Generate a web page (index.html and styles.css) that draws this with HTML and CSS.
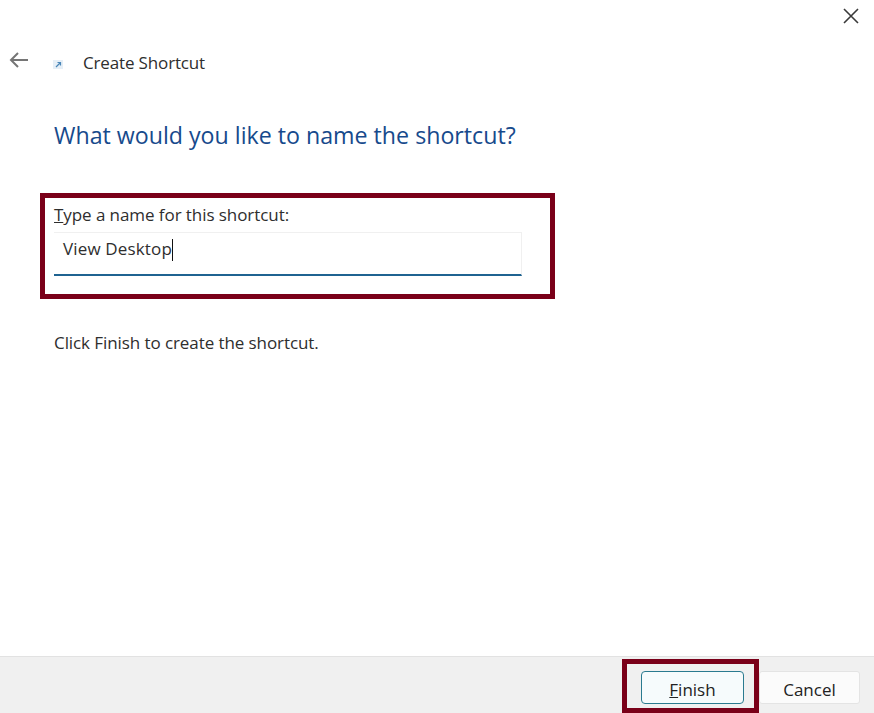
FILE: index.html
```html
<!DOCTYPE html>
<html lang="en">
<head>
    <meta charset="UTF-8">
    <title>Create Shortcut</title>
    <link rel="stylesheet" href="styles.css">
</head>
<body>
    <div class="dialog">
        <div class="title-close">
            <svg class="close-icon" width="16" height="16" viewBox="0 0 16 16">
                <path d="M1 1 L15 15 M15 1 L1 15" stroke="#3a3a3a" stroke-width="1.6" fill="none"/>
            </svg>
        </div>
        <div class="wizard-header">
            <svg class="back-icon" width="20" height="18" viewBox="0 0 20 18">
                <path d="M19 9 H2 M9 2 L2 9 L9 16" stroke="#757575" stroke-width="2" fill="none"/>
            </svg>
            <svg class="shortcut-icon" width="10" height="10" viewBox="0 0 10 10">
                <rect x="0" y="1" width="10" height="9" fill="#e6eff7"/>
                <path d="M3 8 L7 4 M4.500 3.500 H7.500 V6.500" stroke="#4a86b8" stroke-width="1.200" fill="none"/>
            </svg>
            <span class="wizard-title">Create Shortcut</span>
        </div>
        <div class="main">
            <h1 class="heading">What would you like to name the shortcut?</h1>
            <div class="name-box">
                <label class="name-label"><u>T</u>ype a name for this shortcut:</label>
                <div class="name-input">View Desktop<span class="caret"></span></div>
            </div>
            <p class="hint">Click Finish to create the shortcut.</p>
        </div>
        <div class="footer">
            <div class="finish-box">
                <button class="btn btn-primary"><u>F</u>inish</button>
            </div>
            <button class="btn btn-cancel">Cancel</button>
        </div>
    </div>
</body>
</html>
```

FILE: styles.css
```css
html, body {
    margin: 0;
    padding: 0;
    background-color: #ffffff;
}
.dialog {
    width: 874px;
    height: 713px;
    display: flex;
    flex-direction: column;
    overflow: hidden;
    font-family: 'Open Sans', 'Noto Sans', sans-serif;
    font-size: 17px;
    color: #2e2e2e;
}
.title-close {
    height: 24px;
    display: flex;
    justify-content: flex-end;
    align-items: flex-end;
    padding-right: 15px;
}
.wizard-header {
    height: 30px;
    margin-top: 22px;
    display: flex;
    align-items: center;
    padding-left: 9px;
}
.back-icon {
    margin-top: -3px;
}
.shortcut-icon {
    margin-left: 24px;
    margin-top: 6px;
}
.wizard-title {
    margin-left: 20px;
    margin-top: 2px;
    letter-spacing: -0.150px;
}
.main {
    flex: 1;
    padding: 0 0 0 40px;
}
.heading {
    margin: 44px 0 0 14px;
    font-size: 23.200px;
    line-height: 30px;
    font-weight: 400;
    color: #174a8c;
}
.name-box {
    width: 496px;
    height: 96px;
    margin-top: 43px;
    border: 5px solid #7a0019;
    padding: 0 0 0 9px;
}
.name-label {
    display: block;
    margin-top: 6px;
    line-height: 22px;
    letter-spacing: -0.070px;
}
.name-input {
    width: 458px;
    height: 41px;
    margin-top: 6px;
    padding-left: 9px;
    border: 1px solid #f0f0f0;
    border-bottom: 2px solid #1f6391;
    border-left-width: 0;
    line-height: 32px;
    letter-spacing: 0.150px;
}
.caret {
    display: inline-block;
    width: 1px;
    height: 22px;
    background-color: #111111;
    vertical-align: -6px;
}
.hint {
    margin: 33px 0 0 14px;
    line-height: 22px;
    letter-spacing: -0.080px;
}
.footer {
    height: 56px;
    background-color: #f0f0f0;
    border-top: 1px solid #e2e2e2;
    display: flex;
    justify-content: flex-end;
    align-items: flex-start;
    padding-right: 14px;
}
.finish-box {
    width: 113px;
    height: 37px;
    margin-top: 2px;
    border: 5px solid #7a0019;
    padding: 7px 0 0 14px;
}
.btn {
    height: 33px;
    font-family: inherit;
    font-size: 17px;
    color: #222222;
    padding: 3px 0 0;
}
.btn-primary {
    width: 103px;
    background-color: #f6fbfc;
    border: 1.500px solid #2a7a8f;
    border-radius: 4px;
}
.btn-cancel {
    width: 101px;
    margin-top: 14px;
    background-color: #fbfbfb;
    border: 1px solid #e4e4e4;
    border-radius: 3px;
}
```
